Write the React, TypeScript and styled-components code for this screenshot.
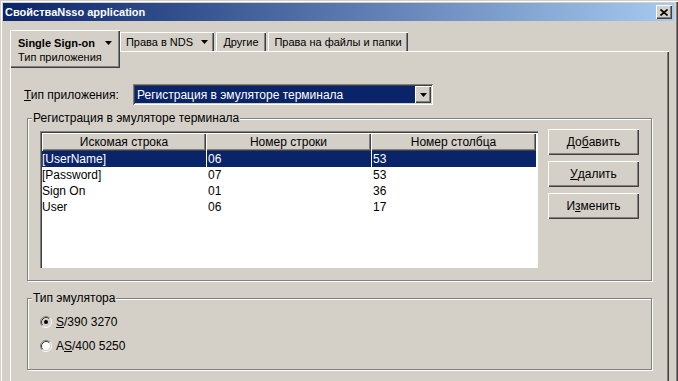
import React from 'react';
import styled, { createGlobalStyle } from 'styled-components';

const Global = createGlobalStyle`
  html, body { margin: 0; padding: 0; background: #d4d0c8; }
  body { font-family: "Liberation Sans", Arial, sans-serif; color: #000; }
  * { box-sizing: border-box; }
`;

const Window = styled.div`
  width: 678px;
  height: 381px;
  overflow: hidden;
  background: #d4d0c8;
  padding: 3px 4px 0 3px;
  display: flex;
  flex-direction: column;
  box-shadow: inset 1px 1px 0 #d4d0c8, inset 2px 2px 0 #fff, inset -1px 0 0 #404040, inset -2px 0 0 #808080;
`;

const TitleBar = styled.div`
  height: 18px;
  flex: none;
  display: flex;
  align-items: center;
  justify-content: space-between;
  padding: 0 2px 0 2px;
  background: linear-gradient(to right, #0a246a, #a6caf0);
  color: #fff;
  font: bold 11px "Liberation Sans", Arial, sans-serif;
`;

const CloseButton = styled.div`
  width: 16px;
  height: 14px;
  display: flex;
  align-items: center;
  justify-content: center;
  background: #d4d0c8;
  box-shadow: inset 1px 1px 0 #fff, inset -1px -1px 0 #404040, inset -2px -2px 0 #808080;
`;

const Body = styled.div`
  flex: 1;
  display: flex;
  flex-direction: column;
  padding: 9px 5px 0 7px;
  font-size: 12px;
`;

const TabStrip = styled.div`
  height: 21px;
  flex: none;
  display: flex;
  align-items: flex-start;
  font-size: 11px;
`;

const ActiveTab = styled.div`
  position: relative;
  z-index: 2;
  width: 110px;
  height: 38px;
  flex: none;
  padding: 6px 0 0 8px;
  background: #d4d0c8;
  display: flex;
  flex-direction: column;
  box-shadow: inset 1px 1px 0 #fff, inset -1px -1px 0 #404040, inset -2px -2px 0 #808080;
`;

const TabTitle = styled.div`
  display: flex;
  align-items: center;
  gap: 10px;
  height: 14px;
  font-weight: bold;
  font-size: 11px;
`;

const TabSub = styled.div`
  height: 15px;
  line-height: 15px;
  font-size: 11px;
`;

const Tab = styled.div<{ $w: number; $gap: number }>`
  width: ${p => p.$w}px;
  margin-left: ${p => p.$gap}px;
  margin-top: 2px;
  height: 19px;
  flex: none;
  display: flex;
  align-items: center;
  justify-content: center;
  gap: 8px;
  background: #d4d0c8;
  box-shadow: inset 1px 1px 0 #fff, inset -1px 0 0 #404040, inset -2px 0 0 #808080;
`;

const Panel = styled.div`
  flex: 1;
  background: #d4d0c8;
  padding: 33px 16px 0 17px;
  display: flex;
  flex-direction: column;
  box-shadow: inset 1px 1px 0 #fff, inset -1px 0 0 #404040, inset -2px 0 0 #808080;
`;

const ComboRow = styled.div`
  display: flex;
  align-items: center;
  height: 21px;
  margin-left: -3px;
`;

const ComboLabel = styled.div`
  width: 109px;
  flex: none;
`;

const Combo = styled.div`
  width: 300px;
  height: 21px;
  padding: 2px;
  display: flex;
  background: #fff;
  box-shadow: inset 1px 1px 0 #808080, inset -1px -1px 0 #fff, inset 2px 2px 0 #404040, inset -2px -2px 0 #d4d0c8;
`;

const ComboValue = styled.div`
  flex: 1;
  background: #0a246a;
  color: #fff;
  padding-left: 2px;
  display: flex;
  align-items: center;
  white-space: nowrap;
`;

const ComboButton = styled.div`
  width: 16px;
  flex: none;
  display: flex;
  align-items: center;
  justify-content: center;
  background: #d4d0c8;
  box-shadow: inset 1px 1px 0 #fff, inset -1px -1px 0 #404040, inset -2px -2px 0 #808080;
`;

const Group = styled.div<{ $top: number }>`
  position: relative;
  width: 625px;
  margin-top: ${p => p.$top}px;
  border: 1px solid #808080;
  box-shadow: inset 1px 1px 0 #fff, 1px 1px 0 #fff;
`;

const Legend = styled.span`
  position: absolute;
  top: -8px;
  left: 4px;
  padding: 0 1px;
  line-height: 14px;
  background: #d4d0c8;
`;

const GroupInner = styled.div`
  display: flex;
  align-items: flex-start;
  padding: 12px;
  gap: 10px;
`;

const ListView = styled.div`
  width: 498px;
  height: 137px;
  padding: 2px;
  background: #fff;
  box-shadow: inset 1px 1px 0 #808080, inset 2px 2px 0 #404040, inset -1px -1px 0 #fff, inset -2px -2px 0 #fff;
`;

const HeaderRow = styled.div`
  display: grid;
  grid-template-columns: 164px 165px 165px;
  height: 18px;
`;

const HeaderCell = styled.div`
  display: flex;
  align-items: center;
  justify-content: center;
  background: #d4d0c8;
  box-shadow: inset 1px 1px 0 #fff, inset -1px -1px 0 #404040, inset -2px -2px 0 #808080;
`;

const Row = styled.div<{ $selected?: boolean }>`
  display: grid;
  grid-template-columns: 164px 165px 165px;
  height: 16px;
  background: ${p => (p.$selected ? '#0a246a' : 'transparent')};
  color: ${p => (p.$selected ? '#fff' : '#000')};
`;

const Cell = styled.div<{ $first?: boolean; $selected?: boolean }>`
  display: flex;
  align-items: center;
  padding-left: ${p => (p.$first ? 0 : 2)}px;
  box-shadow: ${p => (p.$selected && !p.$first ? 'inset 1px 0 0 #fff' : 'none')};
`;

const ButtonColumn = styled.div`
  display: flex;
  flex-direction: column;
  gap: 6px;
  margin-top: -2px;
`;

const Button = styled.div`
  width: 91px;
  height: 26px;
  display: flex;
  align-items: center;
  justify-content: center;
  background: #d4d0c8;
  box-shadow: inset 1px 1px 0 #fff, inset -1px -1px 0 #404040, inset -2px -2px 0 #808080;
`;

const RadioList = styled.div`
  display: flex;
  flex-direction: column;
  gap: 8px;
  padding: 15px 12px;
`;

const RadioRow = styled.div`
  display: flex;
  align-items: center;
  gap: 4px;
  height: 16px;
`;

const Arrow = () => (
  <svg width="7" height="4" viewBox="0 0 7 4">
    <polygon points="0,0 7,0 3.5,4" fill="#000" />
  </svg>
);

const Radio = ({ checked }: { checked?: boolean }) => (
  <svg width="12" height="12" viewBox="0 0 12 12">
    <circle cx="6" cy="6" r="4.5" fill={checked ? '#d4d0c8' : '#fff'} />
    <path d="M2.11 9.89 A5.5 5.5 0 0 1 9.89 2.11" stroke="#808080" fill="none" />
    <path d="M9.89 2.11 A5.5 5.5 0 0 1 2.11 9.89" stroke="#fff" fill="none" />
    <path d="M2.82 9.18 A4.5 4.5 0 0 1 9.18 2.82" stroke="#404040" fill="none" />
    <path d="M9.18 2.82 A4.5 4.5 0 0 1 2.82 9.18" stroke="#d4d0c8" fill="none" />
    {checked && <circle cx="6" cy="6" r="2" fill="#000" />}
  </svg>
);

const rows = [
  ['[UserName]', '06', '53'],
  ['[Password]', '07', '53'],
  ['Sign On', '01', '36'],
  ['User', '06', '17'],
];

export default function App() {
  return (
    <>
      <Global />
      <Window>
        <TitleBar>
          <span>СвойстваNsso application</span>
          <CloseButton>
            <svg width="8" height="7" viewBox="0 0 8 7">
              <path d="M0.5 0.5 L7.5 6.5 M7.5 0.5 L0.5 6.5" stroke="#000" strokeWidth="1.6" />
            </svg>
          </CloseButton>
        </TitleBar>
        <Body>
          <TabStrip>
            <ActiveTab>
              <TabTitle>
                <span>Single Sign-on</span>
                <Arrow />
              </TabTitle>
              <TabSub>Тип приложения</TabSub>
            </ActiveTab>
            <Tab $w={94} $gap={0}>
              <span>Права в NDS</span>
              <Arrow />
            </Tab>
            <Tab $w={50} $gap={2}>Другие</Tab>
            <Tab $w={140} $gap={2}>Права на файлы и папки</Tab>
          </TabStrip>
          <Panel>
            <ComboRow>
              <ComboLabel>
                <u>Т</u>ип приложения:
              </ComboLabel>
              <Combo>
                <ComboValue>Регистрация в эмуляторе терминала</ComboValue>
                <ComboButton>
                  <Arrow />
                </ComboButton>
              </Combo>
            </ComboRow>
            <Group $top={13}>
              <Legend>Регистрация в эмуляторе терминала</Legend>
              <GroupInner>
                <ListView>
                  <HeaderRow>
                    <HeaderCell>Искомая строка</HeaderCell>
                    <HeaderCell>Номер строки</HeaderCell>
                    <HeaderCell>Номер столбца</HeaderCell>
                  </HeaderRow>
                  {rows.map((r, i) => (
                    <Row key={i} $selected={i === 0}>
                      {r.map((c, j) => (
                        <Cell key={j} $first={j === 0} $selected={i === 0}>
                          {c}
                        </Cell>
                      ))}
                    </Row>
                  ))}
                </ListView>
                <ButtonColumn>
                  <Button>
                    До<u>б</u>авить
                  </Button>
                  <Button>
                    <u>У</u>далить
                  </Button>
                  <Button>
                    И<u>з</u>менить
                  </Button>
                </ButtonColumn>
              </GroupInner>
            </Group>
            <Group $top={17}>
              <Legend>Тип эмулятора</Legend>
              <RadioList>
                <RadioRow>
                  <Radio checked />
                  <span>
                    <u>S</u>/390 3270
                  </span>
                </RadioRow>
                <RadioRow>
                  <Radio />
                  <span>
                    A<u>S</u>/400 5250
                  </span>
                </RadioRow>
              </RadioList>
            </Group>
          </Panel>
        </Body>
      </Window>
    </>
  );
}
